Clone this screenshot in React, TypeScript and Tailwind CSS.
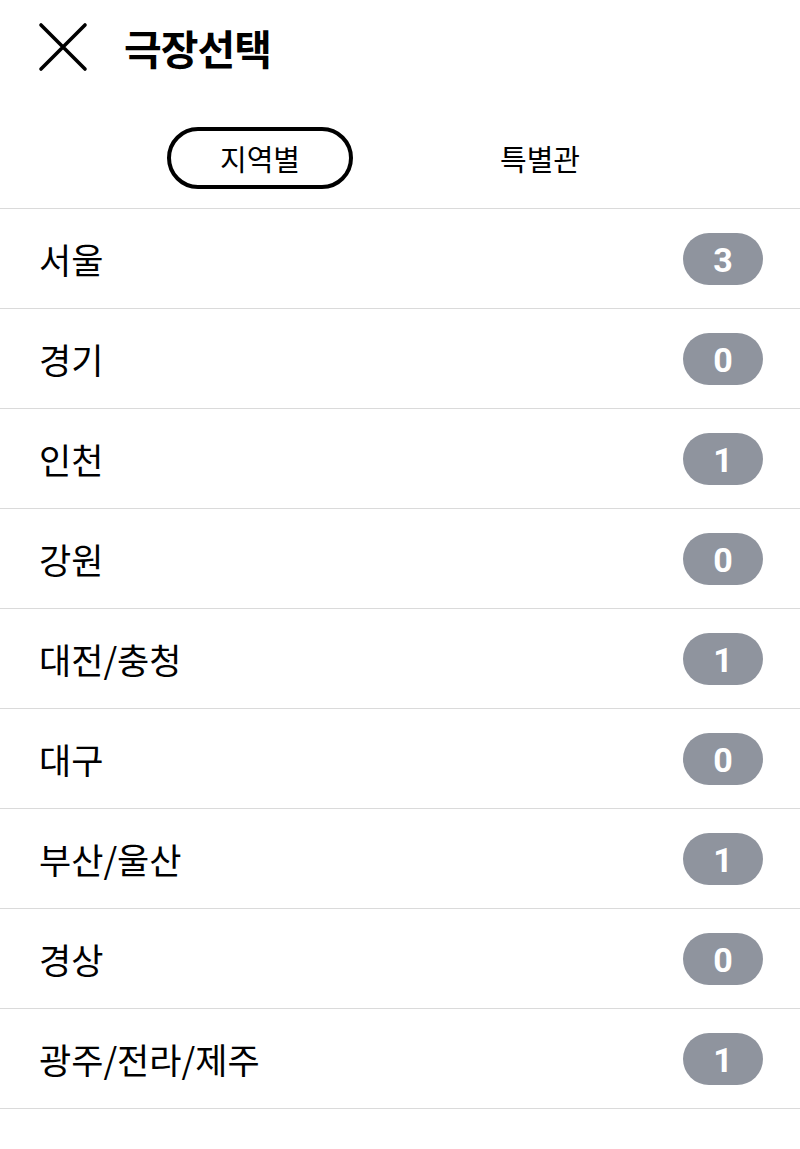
import React from "react";

const regions = [
  { name: "서울", count: 3 },
  { name: "경기", count: 0 },
  { name: "인천", count: 1 },
  { name: "강원", count: 0 },
  { name: "대전/충청", count: 1 },
  { name: "대구", count: 0 },
  { name: "부산/울산", count: 1 },
  { name: "경상", count: 0 },
  { name: "광주/전라/제주", count: 1 },
];

const App = () => {
  return (
    <div
      className="w-[800px] min-h-[1149px] bg-white text-black"
      style={{ fontFamily: '"Noto Sans CJK KR", "Noto Sans", sans-serif' }}
    >
      {/* header */}
      <div className="flex items-center h-[94px] pl-[38px]">
        <svg className="w-[50px] h-[50px]" viewBox="0 0 50 50" fill="none" stroke="black" strokeWidth="3.6" strokeLinecap="round">
          <path d="M3 3L47 47M47 3L3 47" />
        </svg>
        <h1 className="ml-[36px] text-[41px] font-bold leading-none tracking-[-1px]">극장선택</h1>
      </div>

      {/* tabs */}
      <div className="grid grid-cols-2 w-[560px] mx-auto h-[114px] items-center pt-[14px]">
        <div className="flex justify-center">
          <button className="w-[186px] h-[62px] rounded-full border-[4px] border-black text-[29px] leading-none flex items-center justify-center">
            지역별
          </button>
        </div>
        <div className="flex justify-center">
          <span className="text-[29px] leading-none">특별관</span>
        </div>
      </div>

      {/* region list */}
      <ul className="border-t border-[#dadada]">
        {regions.map((region, index) => (
          <li
            key={index}
            className="flex items-center justify-between h-[100px] pl-[39px] pr-[37px] border-b border-[#dadada]"
          >
            <span className="text-[35px] leading-none">{region.name}</span>
            <span
              className="w-[80px] h-[52px] pt-[3px] rounded-full bg-[#8f949e] text-white text-[34px] font-bold flex items-center justify-center leading-none"
              style={{ fontFamily: "Roboto, sans-serif" }}
            >
              {region.count}
            </span>
          </li>
        ))}
      </ul>
    </div>
  );
};

export default App;
